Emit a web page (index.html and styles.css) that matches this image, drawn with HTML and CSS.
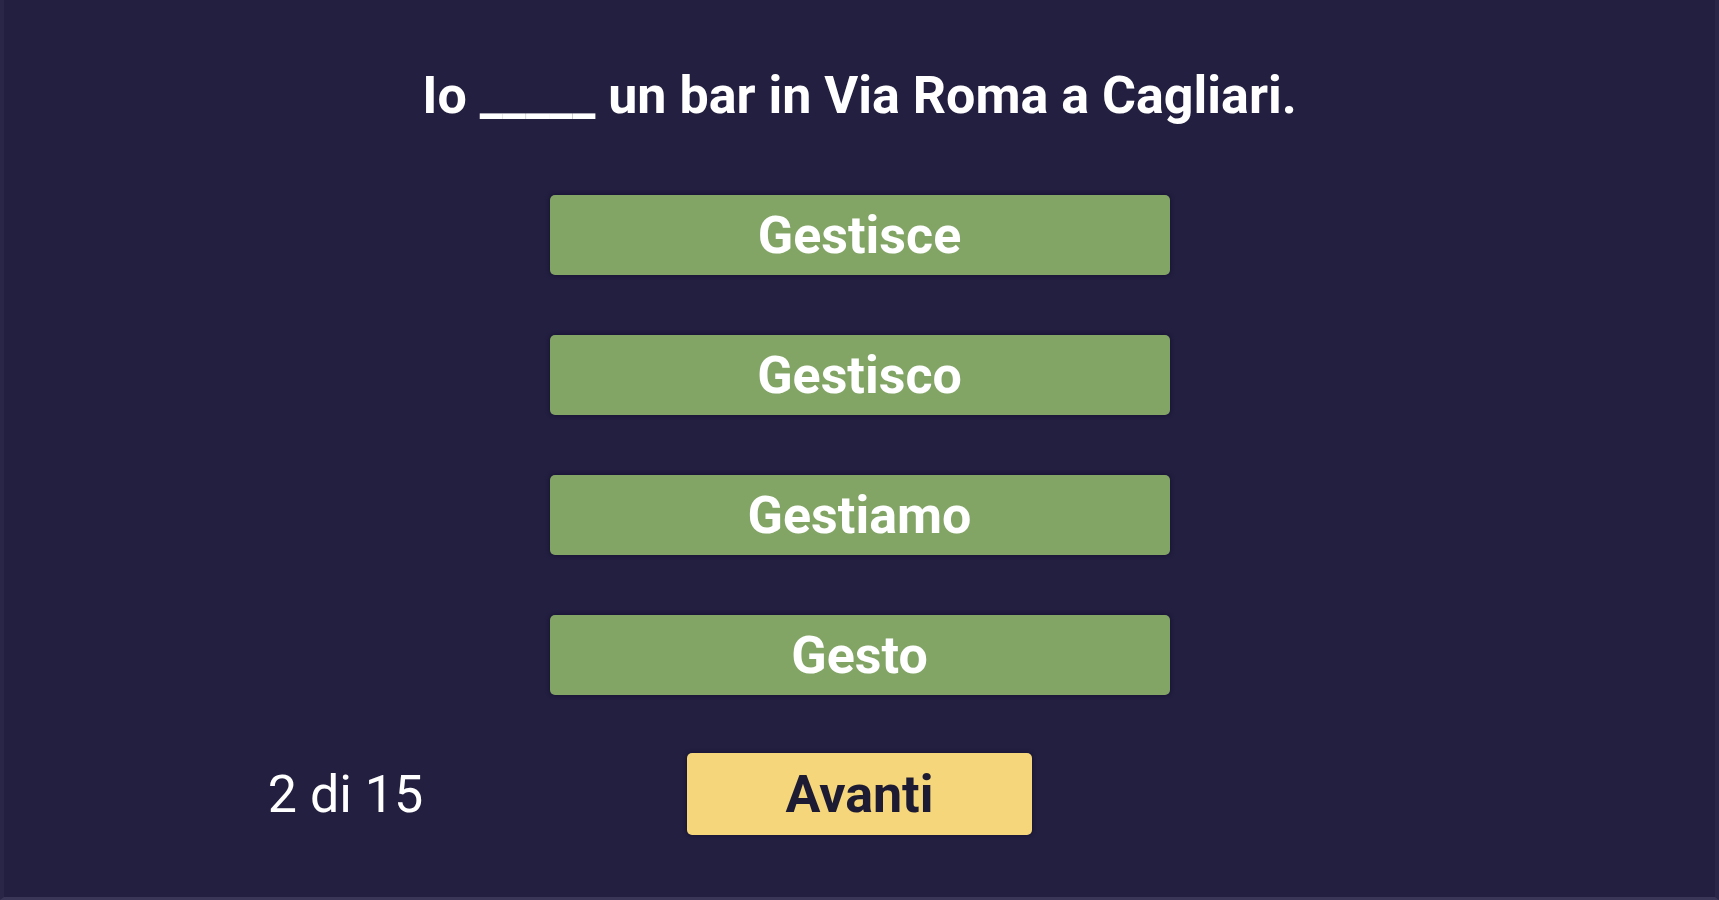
FILE: index.html
```html
<!DOCTYPE html>
<html lang="it">
<head>
    <meta charset="UTF-8">
    <meta name="viewport" content="width=device-width, initial-scale=1.0">
    <title>Quiz</title>
    <link rel="stylesheet" href="styles.css">
</head>
<body>
    <div class="quiz">
        <!-- Question -->
        <h1 class="question">Io _____ un bar in Via Roma a Cagliari.</h1>

        <!-- Answers -->
        <div class="answers">
            <button class="answer">Gestisce</button>
            <button class="answer">Gestisco</button>
            <button class="answer">Gestiamo</button>
            <button class="answer">Gesto</button>
        </div>

        <!-- Footer -->
        <div class="footer">
            <span class="counter">2 di 15</span>
            <button class="next">Avanti</button>
        </div>
    </div>
</body>
</html>
```

FILE: styles.css
```css
/* General Styles */
* {
    box-sizing: border-box;
}

body {
    font-family: Roboto, "Liberation Sans", sans-serif;
    margin: 0;
    height: 100vh;
    background-color: #231f40;
    color: #fff;
    border-left: 4px solid #2a2648;
    border-right: 4px solid #2a2648;
    border-bottom: 3px solid #3a3658;
}

.quiz {
    display: flex;
    flex-direction: column;
    align-items: center;
    padding-top: 66px;
}

/* Question */
.question {
    margin: 0;
    font-size: 52px;
    font-weight: 700;
    line-height: 60px;
}

/* Answers */
.answers {
    display: flex;
    flex-direction: column;
    gap: 60px;
    margin-top: 69px;
}

button {
    font-family: inherit;
    font-weight: 700;
    border: none;
    border-radius: 5px;
    cursor: pointer;
    box-shadow: 0 0 4px #120f30;
}

.answer {
    width: 620px;
    height: 80px;
    font-size: 52px;
    color: #fff;
    background-color: #82a566;
}

/* Footer */
.footer {
    display: grid;
    grid-template-columns: 1fr auto 1fr;
    align-items: center;
    width: 100%;
    margin-top: 58px;
}

.counter {
    justify-self: center;
    font-size: 52px;
}

.next {
    width: 345px;
    height: 82px;
    font-size: 52px;
    color: #1c1b33;
    background-color: #f5d67b;
}
```
